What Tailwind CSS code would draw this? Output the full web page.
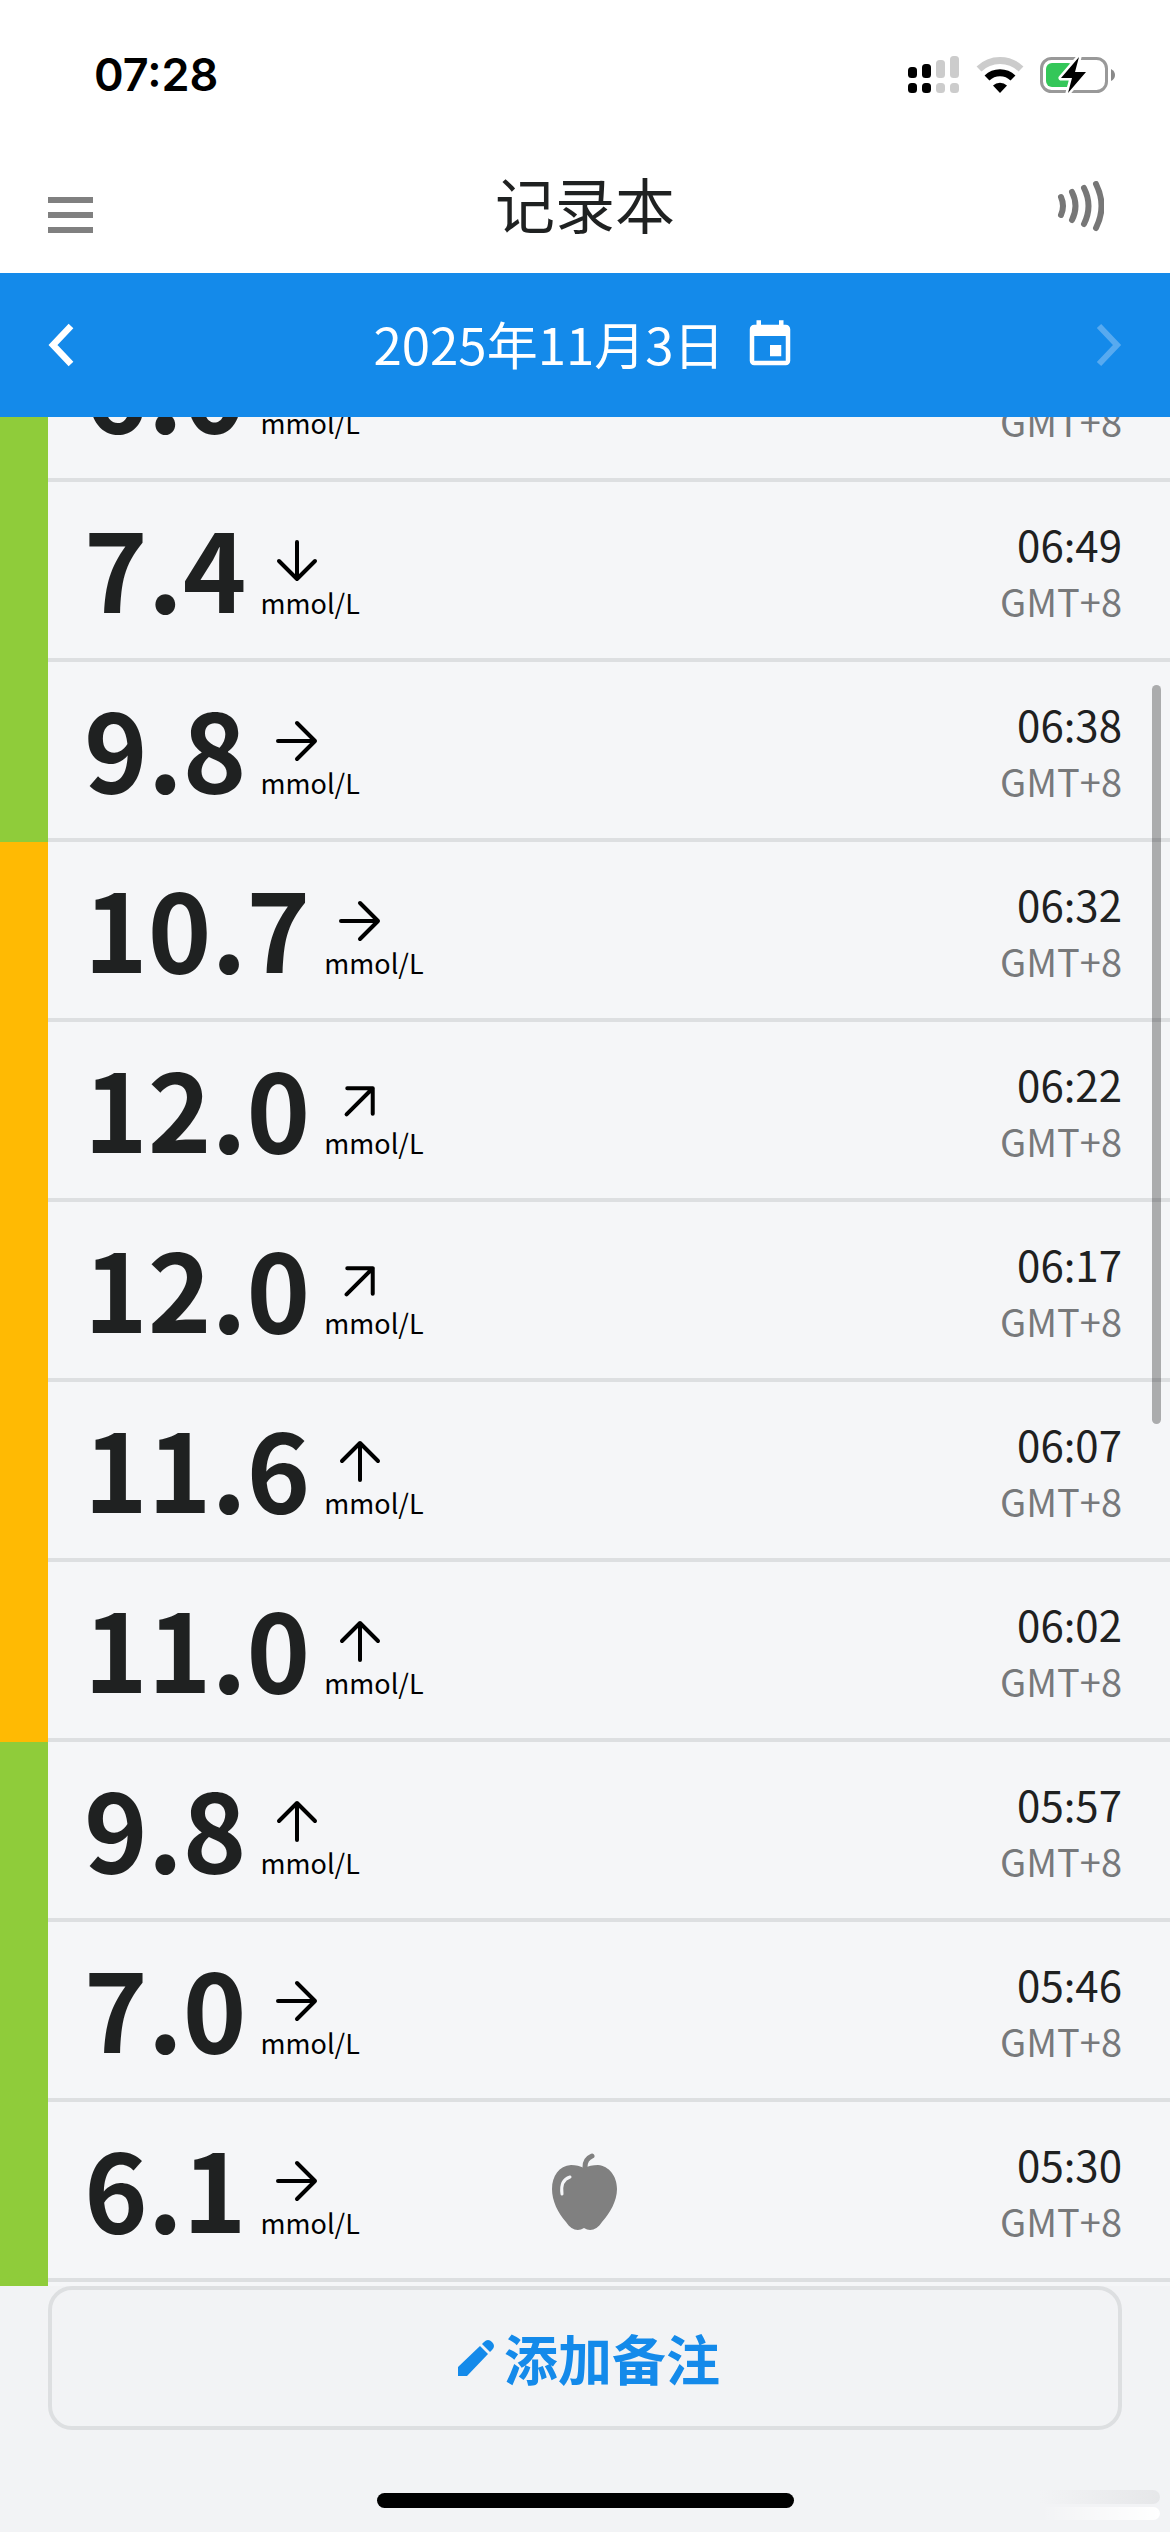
<!DOCTYPE html>
<html lang="zh-CN">
<head>
<meta charset="utf-8">
<meta name="viewport" content="width=device-width, initial-scale=1">
<title>记录本</title>
<script src="https://cdn.jsdelivr.net/npm/@tailwindcss/browser@4"></script>
</head>
<body class="flex h-screen flex-col overflow-hidden bg-[#f2f3f5] font-['Noto_Sans_CJK_SC',sans-serif] text-[#1f2121]">

<!-- Symbols shared by the rows -->
<svg class="hidden" aria-hidden="true">
  <symbol id="arrow" viewBox="0 0 48 48"><path d="M5 24H42M24 6L42 24L24 42" fill="none" stroke="#000" stroke-width="4" stroke-linecap="round" stroke-linejoin="round"/></symbol>
</svg>

<div class="flex h-[141px] shrink-0 items-center justify-between bg-white pt-2 pr-[54px] pl-[94px]">
  <time class="font-['Inter',sans-serif] text-[45px] leading-none font-semibold text-black">07:28</time>
  <div class="flex items-center gap-4">
    <svg class="h-[38px] w-[52px]" viewBox="0 0 52 38" aria-label="信号">
      <g fill="#000"><rect x="0" y="11" width="9" height="11" rx="3.5"/><rect x="14" y="8" width="9" height="14" rx="3.5"/><rect x="0" y="27" width="9" height="10" rx="3.5"/><rect x="14" y="27" width="9" height="10" rx="3.5"/></g>
      <g fill="#ccc"><rect x="28" y="4" width="9" height="18" rx="3.5"/><rect x="42" y="0" width="9" height="22" rx="3.5"/><rect x="28" y="27" width="9" height="10" rx="3.5"/><rect x="42" y="27" width="9" height="10" rx="3.5"/></g>
    </svg>
    <svg class="h-[38px] w-[48px]" viewBox="0 0 48 38" aria-label="Wi-Fi">
      <path d="M3 13A30 30 0 0 1 45 13" fill="none" stroke="#ccc" stroke-width="7"/>
      <path d="M11 22A18.500 18.500 0 0 1 37 22" fill="none" stroke="#000" stroke-width="7"/>
      <path d="M17 29.500A10 10 0 0 1 31 29.500L24 37Z" fill="#000"/>
    </svg>
    <svg class="h-[38px] w-[76px]" viewBox="0 0 76 38" aria-label="正在充电">
      <rect x="1.500" y="2.500" width="65" height="33" rx="10" fill="none" stroke="#999" stroke-width="3"/>
      <path d="M71 13Q75 15 75 19T71 25Z" fill="#8a8a8a"/>
      <rect x="6" y="7" width="28" height="24" rx="6" fill="#34c759"/>
      <path d="M39 1L21 22H32L28 37L46 16H35Z" fill="#000" stroke="#fff" stroke-width="5" paint-order="stroke" stroke-linejoin="round"/>
    </svg>
  </div>
</div>

<header class="grid h-[132px] shrink-0 grid-cols-[1fr_auto_1fr] items-center bg-white px-12">
  <button type="button" aria-label="菜单" class="flex w-[45px] flex-col gap-[9px] pt-4">
    <span class="h-[6px] w-full bg-[#808080]"></span><span class="h-[6px] w-full bg-[#808080]"></span><span class="h-[6px] w-full bg-[#808080]"></span>
  </button>
  <h1 class="pb-2 text-[60px] leading-[80px]">记录本</h1>
  <button type="button" aria-label="扫描传感器" class="justify-self-end pr-[18px]">
    <svg class="h-[52px] w-[48px]" viewBox="0 0 48 52" fill="none" stroke="#777" stroke-width="6" stroke-linecap="round">
      <path d="M5 16Q9 25 5 34M16 11Q23 25 16 39M28 7Q37 25 28 43M40 3Q51 25 40 47"/>
    </svg>
  </button>
</header>

<nav class="flex h-[144px] shrink-0 items-center justify-between bg-[#148aea] px-12 text-white">
  <button type="button" aria-label="前一天"><svg class="h-[44px] w-[26px]" viewBox="0 0 26 44" fill="none" stroke="#fff" stroke-width="6.500"><path d="M23 3L5 22L23 41"/></svg></button>
  <button type="button" class="flex items-center gap-[18px]">
    <span class="pb-1 text-[51px] leading-[72px]">2025年11月3日</span>
    <svg class="size-[54px]" viewBox="0 0 24 24" fill="#fff"><path d="M17 12h-5v5h5v-5zM16 1v2H8V1H6v2H5c-1.110 0-1.990.9-1.990 2L3 19c0 1.100.89 2 2 2h14c1.100 0 2-.9 2-2V5c0-1.100-.9-2-2-2h-1V1h-2zm3 18H5V8h14v11z"/></svg>
  </button>
  <button type="button" disabled aria-label="后一天"><svg class="h-[44px] w-[26px]" viewBox="0 0 26 44" fill="none" stroke="#57aaf0" stroke-width="6"><path d="M3 3L21 22L3 41"/></svg></button>
</nav>

<main class="relative flex min-h-0 flex-1 flex-col">
  <div class="flex min-h-0 flex-1 flex-col justify-end overflow-hidden bg-[#f5f6f8]">
    <ul id="log" class="shrink-0"></ul>
    <div class="h-1 w-12 shrink-0 bg-[#8fcc3a]"></div>
  </div>
  <div class="absolute top-[268px] right-[9px] h-[739px] w-[9px] rounded-full bg-black/30"></div>
</main>

<footer class="relative flex shrink-0 flex-col items-center px-12 pb-6">
  <button type="button" class="flex h-[144px] w-full items-center justify-center gap-[10px] rounded-3xl border-4 border-[#dddfe1] pl-2 text-[54px] font-bold text-[#148aea]">
    <svg class="size-9" viewBox="0 0 36 36" fill="#148aea"><path d="M0 36V27L22 6L30 14L9 36ZM24 4L26 2Q30 -2 34 2Q38 6 34 10L32 12Z"/></svg>
    <span class="leading-[72px]">添加备注</span>
  </button>
  <div class="mt-[63px] h-[15px] w-[417px] rounded-full bg-black"></div>
  <div class="absolute right-[10px] bottom-3 flex w-[120px] flex-col gap-[3px]">
    <span class="h-[14px] rounded-r-full bg-linear-to-r from-transparent to-[#e6e7e9]"></span>
    <span class="h-[13px] rounded-r-full bg-linear-to-r from-transparent to-white"></span>
  </div>
</footer>

<template id="row">
  <li class="flex h-[180px]">
    <div data-k="bar" class="w-12 shrink-0"></div>
    <div class="grid flex-1 grid-cols-[45%_1fr_auto] border-b-4 border-[#dddfe1] pr-12 pl-9">
      <div class="flex items-end gap-[14px] pb-[37px]">
        <strong data-k="value" class="text-[108px] leading-[110px] font-bold"></strong>
        <div class="flex flex-col text-black">
          <svg data-k="arrow" class="ml-3 size-12"><use href="#arrow"/></svg>
          <span class="text-[27px] leading-[36px]">mmol/L</span>
        </div>
      </div>
      <div data-k="note" class="flex items-center pt-1"></div>
      <div class="flex flex-col items-end pt-[34px]">
        <time data-k="time" class="text-[42px] leading-[56px]"></time>
        <span class="text-[38px] leading-[58px] text-[#77797b]">GMT+8</span>
      </div>
    </div>
  </li>
</template>
<template id="apple">
  <svg class="h-[80px] w-[68px]" viewBox="0 0 68 80" aria-label="进餐">
    <path d="M33 16C29 14 25 13 20 13C8 14 1 24 1 37C1 49 7 61 15 70C20 78 27 80 33 76C39 80 46 78 51 70C59 61 66 49 66 37C66 24 58 14 47 13C42 13 37 14 33 16Z" fill="#808080"/>
    <path d="M34 15Q34 7 41 4" fill="none" stroke="#808080" stroke-width="5" stroke-linecap="round"/>
    <path d="M19 25Q9 28 11 42" fill="none" stroke="#f5f6f8" stroke-width="3" stroke-linecap="round"/>
  </svg>
</template>

<script>
  const rows = [
    ["6.0", "r", "06:53", "g"], ["7.4", "d", "06:49", "g"], ["9.8", "r", "06:38", "g"],
    ["10.7", "r", "06:32", "y"], ["12.0", "ne", "06:22", "y"], ["12.0", "ne", "06:17", "y"],
    ["11.6", "u", "06:07", "y"], ["11.0", "u", "06:02", "y"], ["9.8", "u", "05:57", "g"],
    ["7.0", "r", "05:46", "g"], ["6.1", "r", "05:30", "g", true]
  ];
  const turn = { r: "rotate-0", d: "rotate-90", u: "-rotate-90", ne: "-rotate-45" };
  const tone = { g: "bg-[#8fcc3a]", y: "bg-[#ffba03]" };
  const list = document.getElementById("log");
  for (const [value, dir, time, color, meal] of rows) {
    const li = document.getElementById("row").content.cloneNode(true);
    const at = k => li.querySelector(`[data-k=${k}]`);
    at("bar").classList.add(tone[color]);
    at("value").textContent = value;
    at("arrow").classList.add(turn[dir]);
    at("time").textContent = time;
    if (meal) at("note").append(document.getElementById("apple").content.cloneNode(true));
    list.append(li);
  }
</script>
</body>
</html>
